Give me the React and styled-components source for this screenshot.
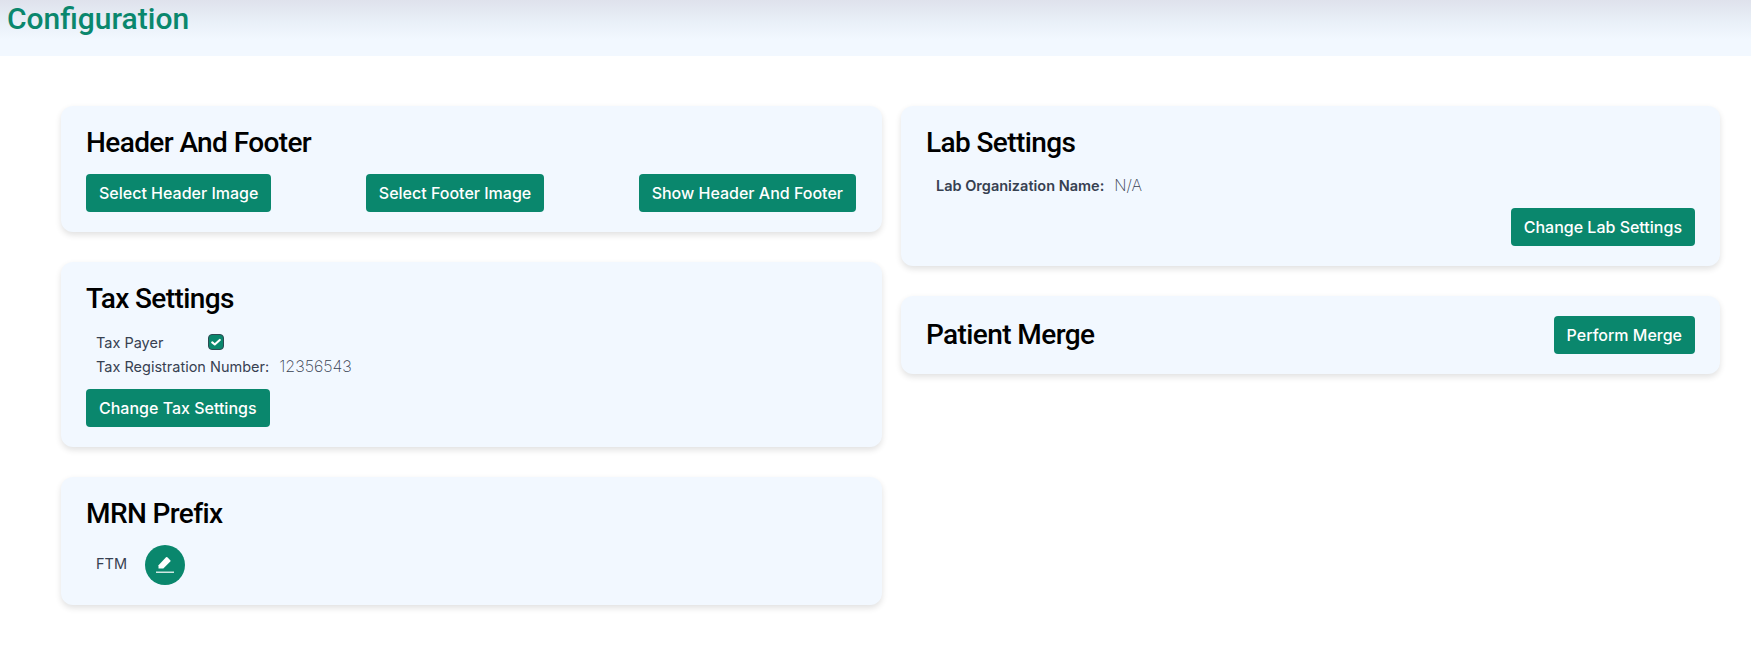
import React from "react";
import styled, { createGlobalStyle } from "styled-components";

const GlobalStyle = createGlobalStyle`
  body {
    margin: 0;
    background: #fff;
    font-family: "Inter", "Liberation Sans", sans-serif;
  }
`;

const TopBar = styled.header`
  height: 56px;
  padding-left: 7px;
  box-sizing: border-box;
  background: linear-gradient(180deg, #dfe2ec 0%, #e9f0f8 40%, #f2f8ff 72%);
`;

const PageTitle = styled.h1`
  margin: 0;
  font-family: "Roboto", sans-serif;
  font-size: 30px;
  line-height: 38px;
  font-weight: 500;
  color: #0a876d;
`;

const Columns = styled.main`
  display: grid;
  grid-template-columns: 821px 819px;
  column-gap: 19px;
  padding: 50px 31px 30px 61px;
`;

const Column = styled.div`
  display: flex;
  flex-direction: column;
  gap: 30px;
`;

const Card = styled.section`
  background: #f2f8ff;
  border-radius: 12px;
  box-shadow: 0 3px 6px rgba(0, 0, 0, 0.12);
  padding: 20px 25px;
  display: flex;
  flex-direction: column;
  ${(p) => p.$inline && "flex-direction: row; align-items: center; justify-content: space-between;"}
`;

const CardTitle = styled.h2`
  margin: 0 0 ${(p) => p.$gap ?? 0}px;
  font-family: "Roboto", sans-serif;
  font-size: 28px;
  letter-spacing: -0.6px;
  line-height: 34px;
  font-weight: 500;
  color: #000;
`;

const ButtonRow = styled.div`
  display: flex;
  justify-content: ${(p) => p.$justify || "space-between"};
  padding-right: ${(p) => p.$inset ?? 0}px;
`;

const Button = styled.button`
  height: 38px;
  padding: 0 13px;
  border: 0;
  border-radius: 4px;
  background: #0a876d;
  color: #fff;
  font-family: "Inter", sans-serif;
  font-size: 16px;
  font-weight: 500;
  white-space: nowrap;
`;

const Row = styled.div`
  display: flex;
  align-items: center;
  height: ${(p) => p.$height || 24}px;
  padding-left: 10px;
  color: #374151;
  font-size: 14.5px;
`;

const Label = styled.span`
  width: ${(p) => (p.$width ? `${p.$width}px` : "auto")};
  font-weight: ${(p) => p.$weight || 400};
  margin-right: ${(p) => p.$space ?? 0}px;
  margin-bottom: ${(p) => p.$lift ?? 0}px;
`;

const Value = styled.span`
  font-weight: 200;
  font-size: 16px;
  color: #374151;
`;

const Checkbox = styled.span`
  width: 16px;
  height: 16px;
  box-sizing: border-box;
  border: 1px solid #2d4a52;
  border-radius: 4px;
  background: #0a876d;
  display: flex;
  align-items: center;
  justify-content: center;
`;

const RoundButton = styled.button`
  width: 40px;
  height: 40px;
  padding: 0;
  border: 0;
  border-radius: 50%;
  background: #0a876d;
  display: flex;
  align-items: center;
  justify-content: center;
`;

const TaxRows = styled.div`
  margin: 14px 0 11px;
`;

const LabRow = styled(Row)`
  margin: 13px 0 11px;
`;

const PrefixRow = styled(Row)`
  margin-top: 14px;
`;

const CheckIcon = () => (
  <svg width="10" height="10" viewBox="0 0 24 24" aria-hidden="true">
    <path d="M3 13l6 5L21 7" fill="none" stroke="#fff" strokeWidth="5" strokeLinecap="round" strokeLinejoin="round" />
  </svg>
);

const EditIcon = () => (
  <svg width="20" height="20" viewBox="0 0 20 20" aria-hidden="true">
    <path d="M3.5 13.5v-3.2L11 2.3a1 1 0 0 1 1.4 0l2.9 2.9a1 1 0 0 1 0 1.4l-7 6.9z" fill="#fff" />
    <rect x="1" y="16.6" width="18" height="1.2" fill="#fff" />
  </svg>
);

export default function App() {
  return (
    <>
      <GlobalStyle />
      <TopBar>
        <PageTitle>Configuration</PageTitle>
      </TopBar>
      <Columns>
        <Column>
          <Card>
            <CardTitle $gap={14}>Header And Footer</CardTitle>
            <ButtonRow $inset={1}>
              <Button>Select Header Image</Button>
              <Button>Select Footer Image</Button>
              <Button>Show Header And Footer</Button>
            </ButtonRow>
          </Card>
          <Card>
            <CardTitle>Tax Settings</CardTitle>
            <TaxRows>
              <Row>
                <Label $width={112}>Tax Payer</Label>
                <Checkbox>
                  <CheckIcon />
                </Checkbox>
              </Row>
              <Row>
                <Label $space={10}>Tax Registration Number:</Label>
                <Value>12356543</Value>
              </Row>
            </TaxRows>
            <ButtonRow $justify="flex-start">
              <Button>Change Tax Settings</Button>
            </ButtonRow>
          </Card>
          <Card>
            <CardTitle>MRN Prefix</CardTitle>
            <PrefixRow $height={40}>
              <Label $space={18} $lift={4}>FTM</Label>
              <RoundButton>
                <EditIcon />
              </RoundButton>
            </PrefixRow>
          </Card>
        </Column>
        <Column>
          <Card>
            <CardTitle>Lab Settings</CardTitle>
            <LabRow>
              <Label $weight={600} $space={10}>Lab Organization Name:</Label>
              <Value>N/A</Value>
            </LabRow>
            <ButtonRow $justify="flex-end">
              <Button>Change Lab Settings</Button>
            </ButtonRow>
          </Card>
          <Card $inline>
            <CardTitle>Patient Merge</CardTitle>
            <Button>Perform Merge</Button>
          </Card>
        </Column>
      </Columns>
    </>
  );
}
